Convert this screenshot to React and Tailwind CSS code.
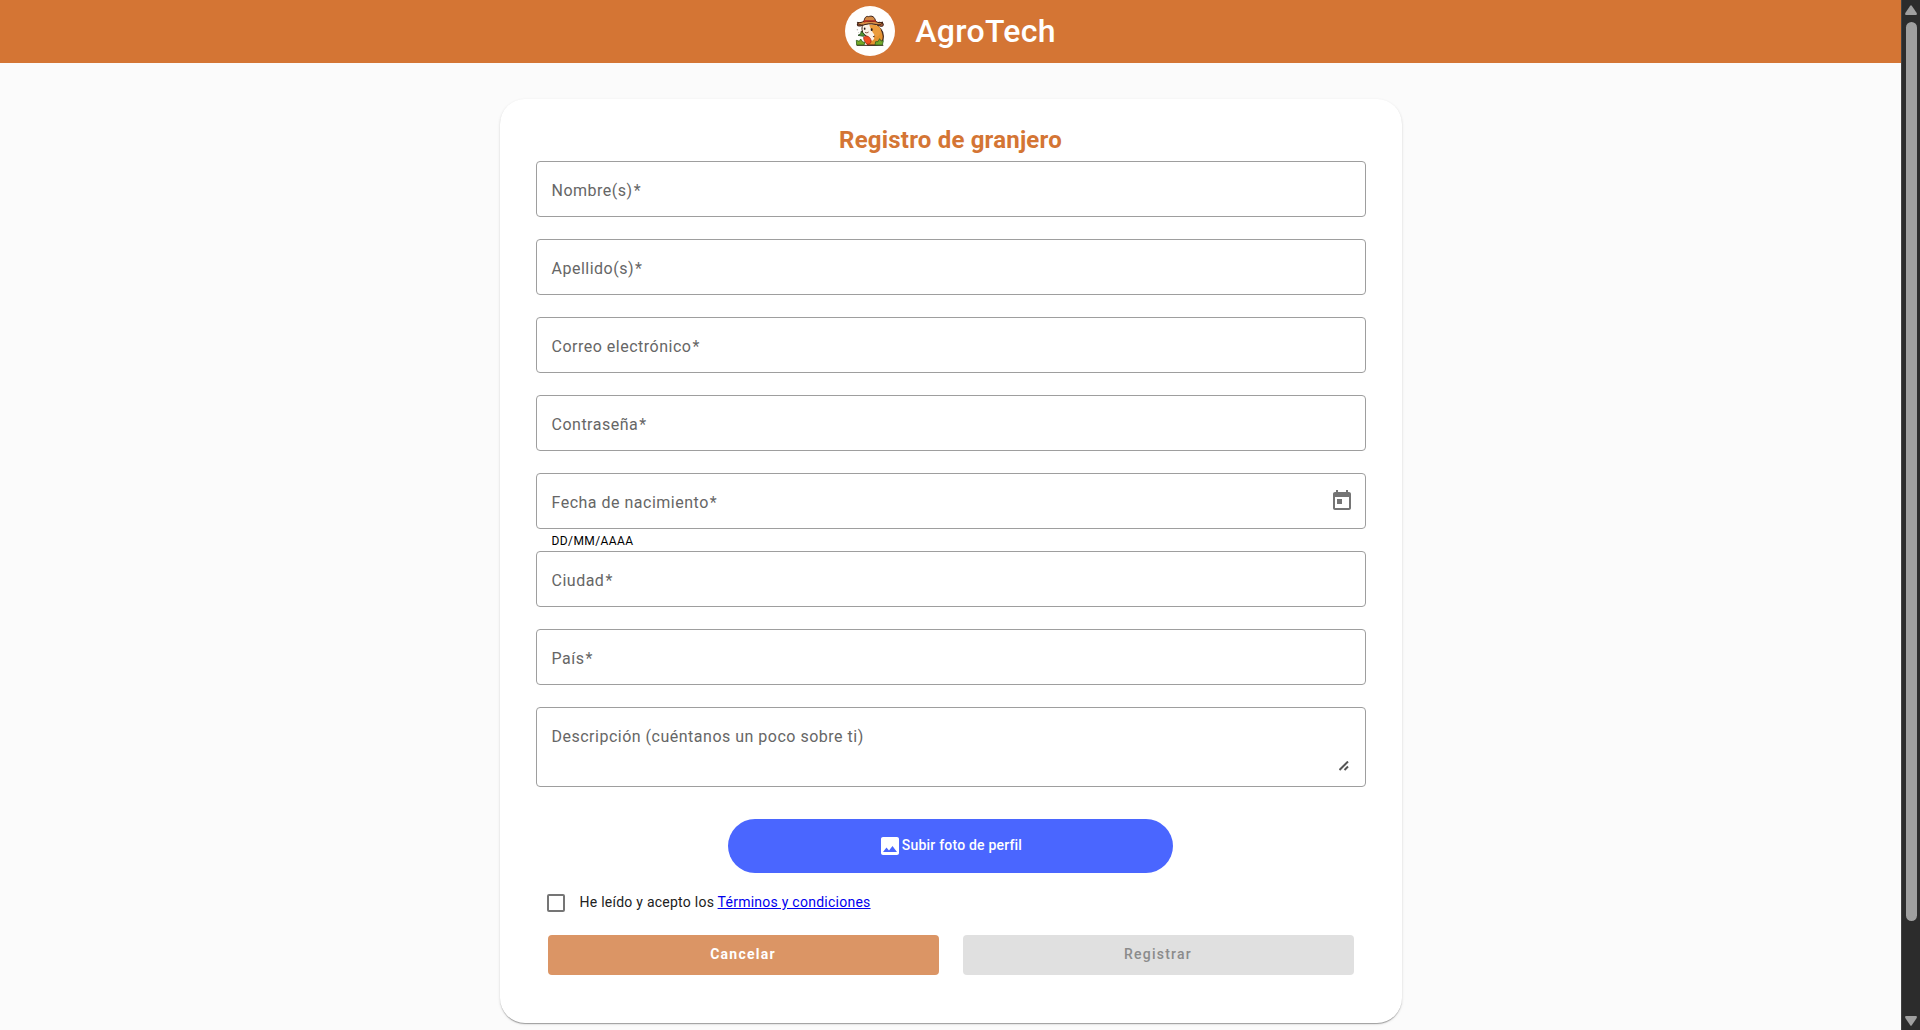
import React from 'react';

function Logo() {
  return (
    <svg viewBox="15 18 150 150" className="size-[50px]" aria-hidden="true">
      <circle cx="90" cy="93" r="75" fill="#fffefd" />
      <path d="M50 136H130" stroke="#3a2418" strokeWidth="3" />
      <path d="M100 80C118 76 130 92 130 109C131 124 121 135 108 135H84C78 128 80 112 86 102Z" fill="#e5922f" stroke="#3d2015" strokeWidth="3.5" />
      <path d="M68 76C76 68 110 68 115 78C119 92 112 105 98 111C85 114 69 106 67 93C65 87 66 80 68 76Z" fill="#fbf1e6" stroke="#3d2015" strokeWidth="3" />
      <path d="M88 74C104 71 118 76 122 87C124 99 118 108 107 113C104 102 92 92 88 74Z" fill="#eb9c3c" />
      <path d="M84 105C94 102 101 108 103 116L97 122L83 116Z" fill="#fdf3e8" />
      <ellipse cx="60" cy="73" rx="8" ry="5" transform="rotate(-12 60 73)" fill="#b9643a" stroke="#3d2015" strokeWidth="3" />
      <ellipse cx="121" cy="73" rx="9" ry="5.5" transform="rotate(15 121 73)" fill="#b9643a" stroke="#3d2015" strokeWidth="3" />
      <path d="M72 66C73 53 78 47 86 50C95 46 105 49 107 66Z" fill="#d48a45" stroke="#3d2015" strokeWidth="3" />
      <path d="M52 67C61 70 66 66 72 64H107C113 68 121 70 128 66C125 76 116 75 105 73C92 70 80 72 70 75C61 76 54 74 52 67Z" fill="#d98f47" stroke="#3d2015" strokeWidth="3" />
      <path d="M71 61H107L108 67C96 64 83 64 71 68Z" fill="#b62f20" />
      <ellipse cx="74" cy="86" rx="2.500" ry="3.500" fill="#281b18" />
      <ellipse cx="95" cy="89" rx="3" ry="4" fill="#281b18" />
      <path d="M75 97Q81 101 86 96" fill="none" stroke="#774330" strokeWidth="2.500" />
      <path d="M71 112C79 104 93 110 93 124C92 131 87 134 80 132C75 126 71 120 71 112Z" fill="#f04d20" stroke="#a52e19" strokeWidth="2.500" />
      <path d="M71 109L54 106L62 101L64 93L69 100L75 104Z" fill="#549633" stroke="#24481d" strokeWidth="2.500" />
      <path d="M50 135L49 121L58 124L62 117L68 126L75 127L72 135Z" fill="#75a928" stroke="#326020" strokeWidth="2.500" />
      <path d="M105 135L107 125L114 125L119 116L123 123L130 122L127 135Z" fill="#75a928" stroke="#326020" strokeWidth="2.500" />
      <path d="M52 87V91M56 97V99M123 86L126 89M125 96V99" stroke="#8b8276" strokeWidth="2" />
    </svg>
  );
}

function CalendarIcon() {
  return (
    <svg viewBox="0 0 24 24" className="size-6" fill="#757575" aria-hidden="true">
      <path d="M19 3h-1V1h-2v2H8V1H6v2H5c-1.11 0-1.99.9-1.99 2L3 19c0 1.1.89 2 2 2h14c1.1 0 2-.9 2-2V5c0-1.1-.9-2-2-2zm0 16H5V8h14v11zM7 10h5v5H7z" />
    </svg>
  );
}

function Field({ label, hint, icon }) {
  return (
    <div className="h-[78px]">
      <div className="flex h-14 items-center justify-between rounded border border-[#9e9e9e] pl-[15px] pr-[11px]">
        <span className="mt-1 text-base tracking-[0.5px] text-[#666666]">
          {label}<span className="ml-px">*</span>
        </span>
        {icon}
      </div>
      {hint && <div className="pl-4 pt-[2px] text-xs leading-5 tracking-[0.4px] text-black">{hint}</div>}
    </div>
  );
}

function Scrollbar() {
  return (
    <div className="flex h-full w-[19px] flex-col items-center justify-between border-l border-[#424242] bg-[#2c2c2c] pt-[5px] pb-1">
      <svg viewBox="0 0 12 10" className="h-2.5 w-3" fill="#9f9f9f"><path d="M5.2.7Q6-.3 6.8.7L11.7 8Q12.3 10 11 10H1Q-.3 10 .3 8Z" /></svg>
      <div className="mb-auto mt-[7px] h-[899px] w-[11px] rounded-full bg-[#9f9f9f]" />
      <svg viewBox="0 0 12 10" className="h-2.5 w-3" fill="#9f9f9f"><path d="M5.2 9.3Q6 10.3 6.8 9.3L11.7 2Q12.3 0 11 0H1Q-.3 0 .3 2Z" /></svg>
    </div>
  );
}

export default function App() {
  return (
    <div className="flex h-[1030px] w-[1920px] overflow-hidden bg-[#fbfbfb] font-['Roboto',sans-serif]">
      <div className="min-w-0 flex-1">
        <header className="flex h-[63px] items-center justify-center gap-5 bg-[#d47534] pb-[2px]">
          <Logo />
          <h1 className="text-[32px] font-medium leading-10 tracking-[0.3px] text-white">AgroTech</h1>
        </header>
        <main className="mx-auto mt-9 h-[924px] w-[902px] rounded-[25px] bg-white px-9 pt-[26px] shadow-[0_2px_1px_-1px_rgba(0,0,0,0.2),0_1px_1px_0_rgba(0,0,0,0.14),0_1px_3px_0_rgba(0,0,0,0.12)]">
          <h2 className="h-9 text-center text-2xl font-bold leading-[30px] tracking-[0.2px] text-[#d47534]">Registro de granjero</h2>
          <Field label="Nombre(s)" />
          <Field label="Apellido(s)" />
          <Field label="Correo electrónico" />
          <Field label="Contraseña" />
          <Field label="Fecha de nacimiento" hint="DD/MM/AAAA" icon={<CalendarIcon />} />
          <Field label="Ciudad" />
          <Field label="País" />
          <div className="flex h-20 justify-between rounded border border-[#9e9e9e] pl-[15px] pr-4">
            <span className="mt-[17px] text-base tracking-[0.5px] text-[#666666]">Descripción (cuéntanos un poco sobre ti)</span>
            <svg viewBox="0 0 10 10" className="mb-[15px] size-2.5 self-end" stroke="#555" strokeWidth="2"><path d="M.5 9L9 .5M5.5 9L9 5.5" /></svg>
          </div>
          <button className="mx-auto mt-8 flex h-[54px] w-[445px] items-center justify-center rounded-full bg-[#4a66ff] text-white">
            <svg viewBox="0 0 24 24" className="-ml-px size-6" fill="currentColor"><path d="M21 19V5c0-1.100-.9-2-2-2H5c-1.100 0-2 .9-2 2v14c0 1.100.9 2 2 2h14c1.100 0 2-.9 2-2zM8.500 13.500l2.500 3.010L14.500 12l4.500 6H5l3.500-4.500z" /></svg>
            <span className="mb-[2px] text-sm font-medium tracking-[0.2px]">Subir foto de perfil</span>
          </button>
          <div className="mt-[21px] flex h-[18px] items-center pl-[11px]">
            <span className="size-[18px] rounded-[2px] border-2 border-[#757575]" />
            <span className="mb-[2px] ml-[15px] text-sm tracking-[0.25px] text-[#212121]">
              He leído y acepto los <a className="text-[#0000ee] underline">Términos y condiciones</a>
            </span>
          </div>
          <div className="mt-[23px] grid grid-cols-2 gap-6 px-3 text-sm tracking-[1.25px]">
            <button className="h-10 rounded bg-[#db9565] pb-[2px] font-bold text-white">Cancelar</button>
            <button className="h-10 rounded bg-[#e0e0e0] pb-[2px] font-medium text-[#8b8b8b]">Registrar</button>
          </div>
        </main>
      </div>
      <Scrollbar />
    </div>
  );
}
